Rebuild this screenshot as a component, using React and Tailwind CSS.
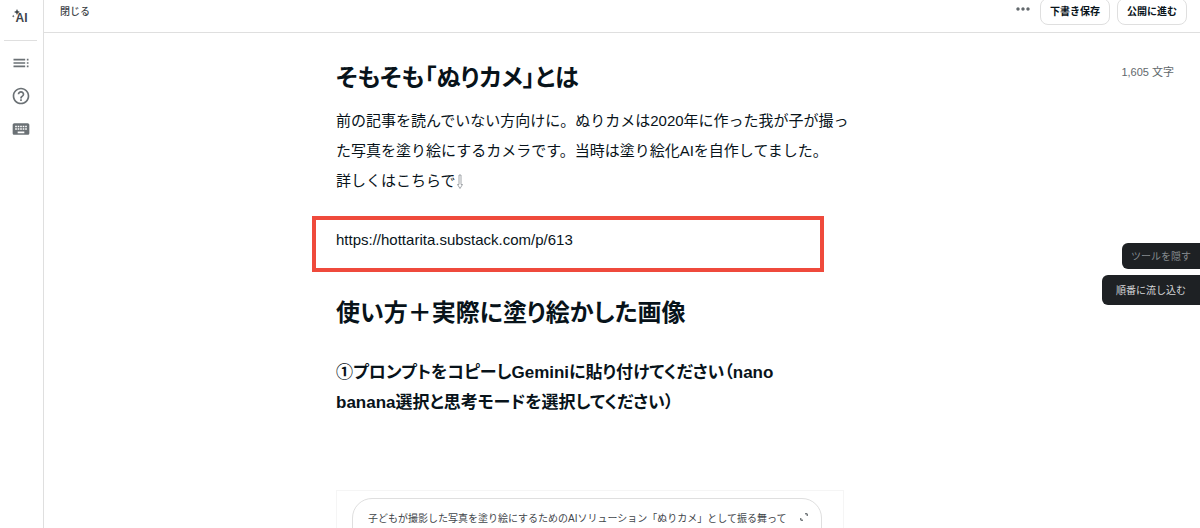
import { MdHelpOutline, MdKeyboard, MdMoreHoriz, MdToc } from 'react-icons/md';

const tools = [
  { label: '目次', icon: MdToc },
  { label: 'ヘルプ', icon: MdHelpOutline },
  { label: 'ショートカット', icon: MdKeyboard },
];

function Sparkle() {
  return (
    <svg viewBox="0 0 10 10" className="absolute left-0 top-0 size-[10px]" fill="currentColor" aria-hidden="true">
      <path d="M5 0 L5.9 2.1 L8 3 L5.9 3.9 L5 6 L4.1 3.9 L2 3 L4.1 2.1 Z" />
      <path d="M1.2 5.8 L1.6 6.8 L2.6 7.2 L1.6 7.6 L1.2 8.6 L0.8 7.6 L0 7.2 L0.8 6.8 Z" />
    </svg>
  );
}

function DownArrow() {
  return (
    <svg viewBox="0 0 8 16" className="inline-block h-4 w-2" fill="none" stroke="#8b9196" strokeWidth="0.8" aria-hidden="true">
      <path d="M3 1 H5 V10.5 H6.5 L4 14.5 L1.5 10.5 H3 Z" />
    </svg>
  );
}

function Sidebar() {
  return (
    <nav className="flex w-11 shrink-0 flex-col items-center border-r border-[#dfdfdf] pl-1 pr-[6px] text-[#6b7175]">
      <button type="button" className="relative mt-[9px] h-4 w-[18px] text-[#3f464b]">
        <Sparkle />
        <span className="absolute left-1 top-[3px] font-['Liberation_Sans',sans-serif] text-xs font-bold leading-3">AI</span>
      </button>
      <hr className="mb-3 mt-[15px] w-full border-[#dfdfdf]" />
      <div className="flex flex-col gap-[13px]">
        {tools.map(({ label, icon: Icon }) => (
          <button key={label} type="button" aria-label={label}>
            <Icon size={20} />
          </button>
        ))}
      </div>
    </nav>
  );
}

function Header() {
  return (
    <header className="flex h-[33px] items-start justify-between overflow-hidden border-b border-[#dfdfdf] pl-4 pr-[13px] text-[10px]">
      <button type="button" className="h-[22px] font-medium text-[#3f464b]">閉じる</button>
      <div className="-mt-[2px] flex gap-[7px] font-bold">
        <button type="button" aria-label="その他" className="h-[22px] text-[#62686c]">
          <MdMoreHoriz size={20} />
        </button>
        <button type="button" className="h-[27px] rounded-lg border border-[#dfdfdf] px-[9px]">下書き保存</button>
        <button type="button" className="h-[27px] rounded-lg border border-[#dfdfdf] px-[9px]">公開に進む</button>
      </div>
    </header>
  );
}

function Article() {
  return (
    <article className="mx-auto w-full max-w-[508px] pt-[25px] text-[15px] leading-[30px]">
      <h2 className="text-2xl font-bold leading-10 [font-feature-settings:'palt']">そもそも「ぬりカメ」とは</h2>
      <p className="mt-2 whitespace-nowrap">
        前の記事を読んでいない方向けに。ぬりカメは2020年に作った我が子が撮っ
        <br />
        た写真を塗り絵にするカメラです。当時は塗り絵化AIを自作してました。
        <br />
        詳しくはこちらで
        <DownArrow />
      </p>
      <p className="-ml-6 mr-5 mt-5 h-14 border-4 border-[#ef4a3c] pl-5 pt-[5px]">
        https://hottarita.substack.com/p/613
      </p>
      <h2 className="mt-[21px] text-2xl font-bold leading-10 [font-feature-settings:'palt']">使い方＋実際に塗り絵かした画像</h2>
      <h3 className="mt-[25px] text-[17px] font-bold [font-feature-settings:'palt']">
        ①プロンプトをコピーしGeminiに貼り付けてください（nano
        <br />
        banana選択と思考モードを選択してください）
      </h3>
      <div className="mt-[72px] border border-[#f5f5f5] px-[15px] pt-[7px]">
        <div className="mr-[6px] flex h-24 items-start justify-between rounded-[20px] border border-[#dfdfdf] pl-[15px] pr-[13px] pt-[10px] text-[10px] leading-5 text-[#3f464b]">
          <p className="whitespace-nowrap">
            子どもが撮影した写真を塗り絵にするためのAIソリューション「ぬりカメ」として振る舞って
          </p>
          <button type="button" aria-label="拡大" className="mt-1">
            <svg viewBox="0 0 8 8" className="size-2" fill="none" stroke="currentColor" strokeWidth="1">
              <path d="M5 0.8 H7.2 V3 M0.8 5 V7.2 H3" />
            </svg>
          </button>
        </div>
      </div>
    </article>
  );
}

export default function App() {
  return (
    <div className="flex h-screen overflow-hidden bg-white font-['Liberation_Sans','Noto_Sans_CJK_JP',sans-serif] text-[#08131a]">
      <Sidebar />
      <div className="min-w-0 flex-1">
        <Header />
        <main className="relative pr-16">
          <Article />
          <p className="absolute right-[26px] top-[31px] text-[11px] leading-4 text-[#62686c]">1,605 文字</p>
        </main>
      </div>

      {/* floating tools on the right edge */}
      <div className="fixed right-0 top-[243px] flex flex-col items-end gap-[6px] text-[10px]">
        <button type="button" className="h-[26px] rounded-l-md bg-[#1e2124] px-[9px] text-[#868b8f]">ツールを隠す</button>
        <button type="button" className="h-[30px] rounded-l-md bg-[#1e2124] px-[14px] text-[#d5d7d9]">順番に流し込む</button>
      </div>
    </div>
  );
}
